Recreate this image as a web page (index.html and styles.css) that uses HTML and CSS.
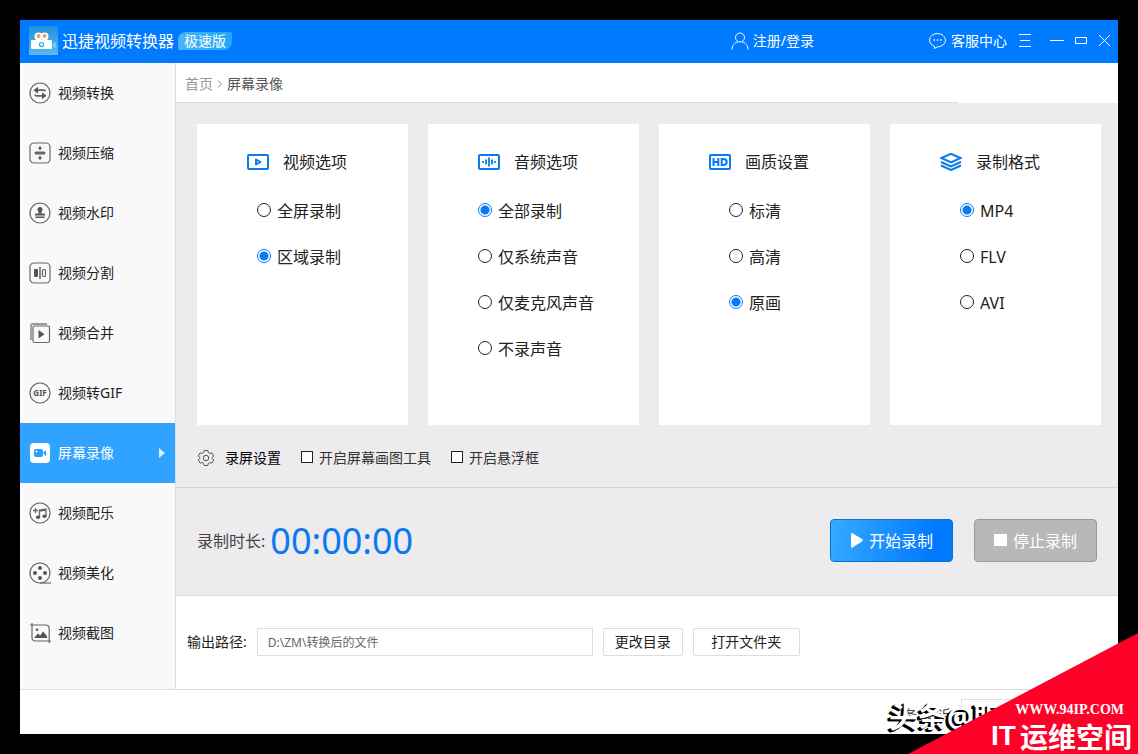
FILE: index.html
```html
<!DOCTYPE html>
<html lang="zh-CN">
<head>
<meta charset="utf-8">
<meta name="viewport" content="width=device-width, initial-scale=1">
<title>迅捷视频转换器</title>
<link rel="stylesheet" href="styles.css">
</head>
<body>
<div class="window">
  <header class="titlebar">
    <svg class="logo" viewBox="0 0 29 29" aria-hidden="true">
      <defs><linearGradient id="lg" x1="0" y1="0" x2="0" y2="1"><stop offset="0" stop-color="#1e8fe0"/><stop offset="1" stop-color="#5cb9f2"/></linearGradient></defs>
      <rect width="29" height="29" fill="url(#lg)"/>
      <circle cx="9.500" cy="10.500" r="4" fill="#fff"/><circle cx="15.500" cy="10.500" r="4" fill="#fff"/>
      <circle cx="9.500" cy="10" r="2" fill="#f5a04c"/><circle cx="15.500" cy="10" r="2" fill="#f5a04c"/>
      <rect x="2" y="14" width="21" height="9" rx="1" fill="#fff"/>
      <path d="M24 17.500l2.500-2v7l-2.500-2z" fill="#69e3f5"/>
      <circle cx="12.500" cy="18.500" r="2" fill="none" stroke="#2ea0ec" stroke-width="1.200"/>
    </svg>
    <h1 class="app-name">迅捷视频转换器</h1>
    <span class="badge">极速版</span>
    <button class="bar-btn login" type="button">
      <svg width="18" height="18" viewBox="0 0 18 18" class="line"><circle cx="9" cy="5.500" r="4.500"/><path d="M1 17.500c0-4 2.500-7 6-7.600M11 9.900c3.500.6 6 3.600 6 7.600"/></svg>
      注册/登录
    </button>
    <button class="bar-btn service" type="button">
      <svg width="17" height="16" viewBox="0 0 17 16" class="line"><path d="M5.500 13.300C2.800 12.300.6 10 .6 7.200.6 3.500 4.100.6 8.500.6s7.900 2.900 7.900 6.600-3.500 6.600-7.900 6.600l-3 1.700z"/><path d="M4.500 7h1.500M7.800 7h1.500M11.100 7h1.500" stroke-width="1.500"/></svg>
      客服中心
    </button>
    <button class="bar-btn menu" type="button" aria-label="菜单"><svg width="14" height="14" viewBox="0 0 14 14" class="line"><path d="M1 .5h12M2 6.500h10M1 12.500h12"/></svg></button>
    <button class="bar-btn min" type="button" aria-label="最小化"><svg width="14" height="14" viewBox="0 0 14 14" class="line"><path d="M0 6.500h14"/></svg></button>
    <button class="bar-btn max" type="button" aria-label="最大化"><svg width="13" height="14" viewBox="0 0 13 14" class="line"><path d="M.5 3.500h11v6H.5z"/></svg></button>
    <button class="bar-btn close" type="button" aria-label="关闭"><svg width="13" height="13" viewBox="0 0 13 13" class="line"><path d="M1 1l11 11M12 1L1 12"/></svg></button>
  </header>

  <div class="body">
    <nav class="sidebar">
      <a class="nav-item" href="#"><svg viewBox="0 0 22 22"><circle cx="11" cy="11" r="10"/><path d="M16 13.800H9.500M6 8.200h9c.8 0 1.200.4 1.200 1M6 12.500c0 .8.400 1.300 1.200 1.300h4" stroke-width="1.700"/><path class="f" d="M4.500 8.200l4.500-3.500v7zM17.500 13.800l-4.500-3.500v7z"/></svg>视频转换</a>
      <a class="nav-item" href="#"><svg viewBox="0 0 22 22"><rect x="1" y="1" width="20" height="20" rx="4"/><path d="M7 11h8" stroke-width="3" stroke-linecap="round"/><path class="f" d="M11 4l2.200 2.600h-1.500V8h-1.400V6.600H8.800zM11 18l2.200-2.600h-1.500V14h-1.400v1.400H8.800z"/></svg>视频压缩</a>
      <a class="nav-item" href="#"><svg viewBox="0 0 22 22"><circle cx="11" cy="11" r="10"/><circle class="f" cx="11" cy="7.500" r="2.500"/><path class="f" d="M10 8h2l.5 3.500H15c.8 0 1 .5 1 2H6c0-1.500.2-2 1-2h2.500zM6.500 14.500h9V16h-9z"/></svg>视频水印</a>
      <a class="nav-item" href="#"><svg viewBox="0 0 22 22"><rect x="1" y="1" width="20" height="20" rx="4"/><rect class="f" x="5" y="7" width="4" height="8" rx="1"/><path d="M11 5v12" stroke-width="1.500"/><rect x="13.500" y="7.500" width="3" height="7" rx="1"/></svg>视频分割</a>
      <a class="nav-item" href="#"><svg viewBox="0 0 22 22"><path d="M2 18V3.500C2 2.300 2.500 2 4 2h14" stroke-width="1.800" stroke="#999"/><rect x="4" y="4" width="16.500" height="16.500" rx="1.500"/><path class="f" d="M9.500 8v8.500l6-4.200z"/></svg>视频合并</a>
      <a class="nav-item" href="#"><svg viewBox="0 0 22 22"><circle cx="11" cy="11" r="10"/><text class="icon-text" x="11" y="13.500">GIF</text></svg>视频转GIF</a>
      <a class="nav-item active" href="#" aria-current="page"><svg viewBox="0 0 22 22"><rect x="1" y="1" width="20" height="20" rx="4" fill="#fff" stroke="none"/><rect x="5" y="7" width="9" height="8" rx="2" fill="#2b9ffc" stroke="none"/><path d="M14.500 10.300L17 8v6l-2.500-2.300z" fill="#2b9ffc" stroke="none"/><circle cx="7.500" cy="9.500" r="1" fill="#fff" stroke="none"/></svg>屏幕录像<svg class="arrow" viewBox="0 0 6 10"><path d="M0 0l6 5-6 5z"/></svg></a>
      <a class="nav-item" href="#"><svg viewBox="0 0 22 22"><circle cx="11" cy="11" r="10"/><path d="M4 8.500h5M6.500 6v5M10.500 15V8l6.500-1v7M10.500 9l6.500-1" stroke-width="1.300"/><ellipse class="f" cx="9" cy="15.300" rx="2.100" ry="1.700"/><ellipse class="f" cx="15.500" cy="14.300" rx="2.100" ry="1.700"/></svg>视频配乐</a>
      <a class="nav-item" href="#"><svg viewBox="0 0 22 22"><circle cx="11" cy="11" r="10"/><path d="M11 21h11"/><circle class="f" cx="11" cy="6" r="2"/><circle class="f" cx="6" cy="11" r="2"/><circle class="f" cx="16" cy="11" r="2"/><circle class="f" cx="11" cy="16" r="2"/></svg>视频美化</a>
      <a class="nav-item" href="#"><svg viewBox="0 0 22 22"><path d="M1 3h15.500c2.500 0 3.700 1.200 3.700 3.500V21M3 1v14.500C3 18 4 19 6.500 19H22"/><circle class="f" cx="8" cy="7.800" r="1.300"/><path class="f" d="M5 16l4-4.500 2.200 2L14 9.500l4 4.500v2z"/></svg>视频截图</a>
    </nav>

    <main class="main">
      <div class="crumbs"><a href="#">首页</a><svg width="6" height="8" viewBox="0 0 6 8"><path d="M1 .5L4.500 4 1 7.500"/></svg><span>屏幕录像</span></div>

      <section class="options">
        <div class="cards">
          <fieldset class="card">
            <legend class="card-title"><svg viewBox="0 0 22 18"><rect x="1" y="2" width="20" height="14" rx="1"/><path d="M9 6.500v5L13.500 9z" stroke-linejoin="round"/></svg>视频选项</legend>
            <div class="choices indent-s">
              <label><input type="radio" name="video">全屏录制</label>
              <label><input type="radio" name="video" checked>区域录制</label>
            </div>
          </fieldset>
          <fieldset class="card">
            <legend class="card-title"><svg viewBox="0 0 22 18"><rect x="1" y="2" width="20" height="14" rx="1"/><path d="M5 8v2M8 6.500v5M11 4.500v9M14 6.500v5M17 8v2" stroke-width="1.800"/></svg>音频选项</legend>
            <div class="choices">
              <label><input type="radio" name="audio" checked>全部录制</label>
              <label><input type="radio" name="audio">仅系统声音</label>
              <label><input type="radio" name="audio">仅麦克风声音</label>
              <label><input type="radio" name="audio">不录声音</label>
            </div>
          </fieldset>
          <fieldset class="card">
            <legend class="card-title"><svg viewBox="0 0 22 18"><rect x="1" y="2" width="20" height="14" rx="1"/><path d="M4.500 5v8M9.300 5v8M4.500 9h5M12.700 5.900v6.200h1.300c2.500 0 3.700-1.200 3.700-3.100s-1.200-3.100-3.700-3.100z"/></svg>画质设置</legend>
            <div class="choices indent-m">
              <label><input type="radio" name="quality">标清</label>
              <label><input type="radio" name="quality">高清</label>
              <label><input type="radio" name="quality" checked>原画</label>
            </div>
          </fieldset>
          <fieldset class="card">
            <legend class="card-title"><svg viewBox="0 0 22 18"><path d="M1.500 5L11 .8 20.500 5 11 9.300zM1 9l10 4.500L21 9M1 12.500L11 17l10-4.500"/></svg>录制格式</legend>
            <div class="choices indent-m">
              <label><input type="radio" name="format" checked>MP4</label>
              <label><input type="radio" name="format">FLV</label>
              <label><input type="radio" name="format">AVI</label>
            </div>
          </fieldset>
        </div>
        <div class="settings">
          <button class="settings-btn" type="button"><svg width="18" height="18" viewBox="0 0 18 18"><path d="M7.200 1.500h3.600l.6 2 1.500.9 2-.5 1.800 3-1.400 1.500v1.200l1.400 1.500-1.800 3-2-.5-1.500.9-.6 2H7.200l-.6-2-1.500-.9-2 .5-1.800-3 1.400-1.500V8.400L1.300 6.900l1.800-3 2 .5 1.500-.9z"/><circle cx="9" cy="9" r="2.700"/></svg>录屏设置</button>
          <label><input type="checkbox">开启屏幕画图工具</label>
          <label><input type="checkbox">开启悬浮框</label>
        </div>
      </section>

      <section class="record">
        <span class="record-label">录制时长:</span>
        <time class="timer">00:00:00</time>
        <button class="rec-btn start" type="button"><svg width="13" height="16" viewBox="0 0 13 16"><path d="M1 1.500Q1-.5 2.500.3l9.500 5.800q1.300 1.200 0 2.400l-9.500 6Q1 15.300 1 13.500z"/></svg>开始录制</button>
        <button class="rec-btn stop" type="button"><svg width="13" height="16" viewBox="0 0 13 16"><path d="M0 1h13v12H0z"/></svg>停止录制</button>
      </section>

      <section class="output">
        <label for="path">输出路径:</label>
        <input id="path" class="path" type="text" value="D:\ZM\转换后的文件">
        <button class="plain-btn" type="button">更改目录</button>
        <button class="plain-btn wide" type="button">打开文件夹</button>
      </section>
    </main>
  </div>

  <footer class="footer">
    <span class="footer-text">务</span><span class="footer-text">诉</span><span class="footer-box"></span>
  </footer>
</div>

<div class="byline">头条@职</div>
<div class="corner">
  <span class="corner-url">WWW.94IP.COM</span>
  <span class="corner-name"><span class="corner-it">IT</span>运维空间</span>
</div>
</body>
</html>
```
FILE: styles.css
```css
* { box-sizing: border-box; }

body {
  margin: 0;
  padding: 20px;
  min-height: 100vh;
  display: flex;
  background: #000;
  color: #222;
  font: 14px/20px "Noto Sans", "Noto Sans CJK SC", sans-serif;
  position: relative;
}

button, input { font: inherit; color: inherit; margin: 0; }
button { cursor: pointer; padding: 0; }
a { color: inherit; text-decoration: none; }
svg { flex: none; }

.window {
  flex: 1;
  min-width: 0;
  display: flex;
  flex-direction: column;
  background: #fff;
}

/* title bar */
.titlebar {
  display: flex;
  align-items: center;
  height: 43px;
  padding: 0 7px 2px 9px;
  background: #007aff;
  color: #fff;
}
.logo { width: 29px; height: 29px; }
.app-name { margin: 0 4px 0 4px; font-size: 16px; font-weight: 400; line-height: 24px; }
.badge {
  padding: 0 6px;
  line-height: 18px;
  border-radius: 8px 2px 8px 2px;
  background: linear-gradient(90deg, #49b4fb, #21a8f6);
}
.bar-btn {
  display: flex;
  align-items: center;
  gap: 4px;
  border: 0;
  background: none;
  color: #fff;
}
.line { fill: none; stroke: #fff; stroke-width: 1; }
.login { margin: 0 115px 0 auto; }
.service { gap: 5px; }
.menu { margin-left: 11px; }
.min { margin-left: 18px; }
.max { margin-left: 11px; }
.close { margin-left: 10px; }

/* sidebar */
.body { flex: 1; display: flex; }
.sidebar {
  width: 156px;
  flex: none;
  border-right: 1px solid #ddd;
  background: #f9f9f9;
}
.nav-item {
  display: flex;
  align-items: center;
  gap: 7px;
  height: 60px;
  padding: 0 10px 0 9px;
}
.nav-item svg { width: 22px; height: 22px; fill: none; stroke: #666; stroke-width: 1.2; }
.nav-item .f { fill: #555; stroke: none; }
.nav-item .icon-text { fill: #555; stroke: none; font-size: 8px; font-weight: 700; text-anchor: middle; }
.nav-item.active { background: #2fa3ff; color: #fff; }
.nav-item .arrow { width: 6px; height: 10px; margin-left: auto; fill: #d9efff; stroke: none; }

/* main column */
.main { flex: 1; min-width: 0; display: flex; flex-direction: column; }
.crumbs {
  display: flex;
  align-items: center;
  height: 40px;
  padding: 1px 9px 0;
  gap: 4px;
  color: #555;
  background: linear-gradient(#dcdce0, #dcdce0) left bottom / 83% 1px no-repeat;
}
.crumbs a { color: #999; }
.crumbs svg { fill: none; stroke: #888; }

.options {
  flex: 1;
  display: flex;
  flex-direction: column;
  padding: 21px 17px 19px 21px;
  background: #edebee;
  border-bottom: 1px solid #d3d3d3;
}
.cards { flex: 1; display: grid; grid-template-columns: repeat(4, 1fr); gap: 20px; }
.card {
  min-width: 0;
  min-height: 300px;
  margin: 0;
  padding: 26px 0 20px 50px;
  border: 0;
  background: #fff;
  font-size: 16px;
  line-height: 24px;
}
.card-title { float: left; display: flex; align-items: center; gap: 14px; padding: 0; margin-bottom: 25px; }
.card-title svg { width: 22px; height: 18px; fill: none; stroke: #0a7af0; stroke-width: 2; }
.choices { clear: both; display: flex; flex-direction: column; gap: 22px; }
.choices label { display: flex; align-items: center; gap: 6px; }
.indent-s { padding-left: 10px; }
.indent-m { padding-left: 20px; }

input[type="radio"] {
  appearance: none;
  width: 14px;
  height: 14px;
  margin-bottom: 2px;
  border: 1px solid #222;
  border-radius: 50%;
  background: #fff;
}
input[type="radio"]:checked {
  border-color: #0a7af0;
  background: radial-gradient(circle, #0a7af0 4px, #fff 5px);
}
input[type="checkbox"] {
  appearance: none;
  width: 12px;
  height: 12px;
  margin-bottom: 2px;
  border: 1px solid #222;
  background: #fff;
}

.settings { display: flex; align-items: center; gap: 20px; margin-top: 23px; color: #333; }
.settings label { display: flex; align-items: center; gap: 6px; }
.settings-btn { display: flex; align-items: center; gap: 10px; border: 0; background: none; color: #000; }
.settings-btn svg { fill: none; stroke: #555; stroke-width: 1; }

/* recording */
.record {
  display: flex;
  align-items: center;
  padding: 31px 21px 33px;
  background: #edebee;
  border-bottom: 1px solid #d9d9d9;
}
.record-label { font-size: 16px; color: #444; }
.timer { margin: 0 auto 0 5px; font-size: 36px; line-height: 43px; color: #0a7af0; }
.rec-btn {
  display: flex;
  align-items: center;
  justify-content: center;
  gap: 6px;
  width: 123px;
  height: 43px;
  border: 1px solid #0b6fd0;
  border-radius: 4px;
  font-size: 16px;
  color: #fff;
}
.rec-btn svg { fill: #fff; }
.start { background: linear-gradient(100deg, #36abff, #0078ff 85%); }
.stop { margin-left: 21px; border-color: #999; background: #b8b8b8; }

/* output path */
.output { display: flex; align-items: center; gap: 10px; padding: 32px 12px 33px 11px; }
.path { width: 336px; height: 28px; padding: 0 10px; border: 1px solid #ddd; font-size: 12px; color: #666; }
.plain-btn { width: 80px; height: 28px; border: 1px solid #ddd; border-radius: 2px; background: #fff; }
.plain-btn.wide { width: 107px; }

/* footer */
.footer {
  display: flex;
  align-items: flex-start;
  justify-content: flex-end;
  gap: 20px;
  height: 45px;
  padding-top: 9px;
  border-top: 1px solid #ddd;
}
.footer-text { padding-top: 6px; color: #444; }
.footer-box { width: 157px; height: 28px; margin-left: -10px; border: 1px solid #ddd; border-right: 0; }

/* overlays */
.byline {
  position: absolute;
  right: 136px;
  bottom: 20px;
  white-space: nowrap;
  font-size: 29px;
  line-height: 34px;
  font-weight: 700;
  color: #fff;
  text-shadow: -1px 1px 0 #000, -2px 2px 0 #000, -3px 2px 0 #000;
}
.corner {
  position: absolute;
  right: 0;
  bottom: 0;
  width: 230px;
  height: 121px;
  display: flex;
  flex-direction: column;
  align-items: flex-end;
  justify-content: flex-end;
  padding: 0 6px 0 0;
  background: #ff0029;
  clip-path: polygon(100% 0, 100% 100%, 0 100%);
  color: #fff;
  font-weight: 700;
}
.corner-url { padding-right: 8px; font-family: "Liberation Serif", serif; font-size: 14px; line-height: 17px; }
.corner-name {
  display: flex;
  gap: 4px;
  font-family: "Noto Sans CJK SC", sans-serif;
  font-size: 28px;
  line-height: 36px;
}
.corner-it { font-family: "Liberation Sans", sans-serif; }
```
